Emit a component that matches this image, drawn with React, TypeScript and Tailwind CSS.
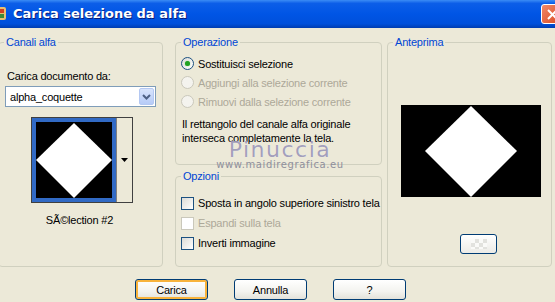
import React from "react";

// Windows XP style dialog: "Carica selezione da alfa"
const ui = "font-['Liberation_Sans',Arial,sans-serif] text-[11px] leading-[14px] tracking-[-0.2px] text-black";

function GroupBox({ title, className, children }: { title: string; className?: string; children?: React.ReactNode }) {
  return (
    <fieldset className={`border border-[#D0D0BF] rounded-[4px] ${className ?? ""}`}>
      <legend className="ml-[5px] px-[2px] text-[#0046D5] leading-[13px]">{title}</legend>
      {children}
    </fieldset>
  );
}

function Radio({ label, checked, disabled }: { label: string; checked?: boolean; disabled?: boolean }) {
  return (
    <div className="flex items-center h-[19px] whitespace-nowrap">
      <span
        className={`w-[13px] h-[13px] rounded-full border flex items-center justify-center ${
          disabled ? "border-[#CAC8BB] bg-[#F4F3EE]" : "border-[#1C5180] bg-[linear-gradient(135deg,#DCDCD7,#FFFFFF)]"
        }`}
      >
        {checked && <span className="w-[5px] h-[5px] rounded-full bg-[#21A121] shadow-[0_0_1px_#5CD05C]" />}
      </span>
      <span className={`ml-[4px] ${disabled ? "text-[#ACA899]" : ""}`}>{label}</span>
    </div>
  );
}

function Check({ label, disabled }: { label: string; disabled?: boolean }) {
  return (
    <div className="flex items-center h-[20px] whitespace-nowrap">
      <span
        className={`w-[13px] h-[13px] shrink-0 border ${
          disabled ? "border-[#CAC8BB] bg-white" : "border-[#1C5180] bg-[linear-gradient(135deg,#DCDCD7,#FFFFFF)]"
        }`}
      />
      <span className={`ml-[4px] ${disabled ? "text-[#ACA899]" : ""}`}>{label}</span>
    </div>
  );
}

function XpButton({ label, focused }: { label: string; focused?: boolean }) {
  return (
    <button
      className={`w-[73px] h-[21px] rounded-[3px] border border-[#003C74] bg-[linear-gradient(to_bottom,#FFFFFF,#F3F3EF_60%,#E3E2DA)] flex items-center justify-center ${
        focused ? "shadow-[inset_0_0_0_2px_#F8B33C]" : ""
      }`}
    >
      {label}
    </button>
  );
}

function Diamond({ w, h, cls }: { w: number; h: number; cls: string }) {
  return (
    <svg width={w} height={h} className={cls}>
      <rect width={w} height={h} fill="#000" />
      <polygon points={`${w / 2},1 ${w / 2 + h / 2},${h / 2} ${w / 2},${h} ${w / 2 - h / 2},${h / 2}`} fill="#fff" />
    </svg>
  );
}

export default function App() {
  return (
    <div className={`w-[555px] h-[302px] overflow-hidden bg-[#ECE9D8] ${ui}`}>
      {/* Title bar */}
      <div className="h-[28px] flex items-center bg-[linear-gradient(to_bottom,#3B8CF5,#0C5EE8_12%,#0055E5_50%,#0050DB_85%,#003DB0)]">
        <svg width="8" height="16">
          <rect x="-4" y="1" width="10" height="13" rx="2" fill="#E8C070" />
          <rect x="-2" y="3" width="6" height="4" fill="#D04020" />
          <rect x="-2" y="8" width="6" height="4" fill="#3A8A3A" />
        </svg>
        <span className="ml-[5px] text-white font-bold text-[13px] tracking-normal font-['DejaVu_Sans',sans-serif] [text-shadow:1px_1px_0_#0A1E7A]">
          Carica selezione da alfa
        </span>
        <div className="ml-auto mr-[-9px] w-[23px] h-[20px] rounded-[3px] border border-white bg-[linear-gradient(135deg,#F0896A,#D9461C)] flex items-center justify-center">
          <svg width="11" height="11">
            <path d="M1 1 L10 10 M10 1 L1 10" stroke="#fff" strokeWidth="2" />
          </svg>
        </div>
      </div>

      {/* Body */}
      <div className="flex pt-[8px] h-[239px]">
        {/* Canali alfa */}
        <GroupBox title="Canali alfa" className="ml-[-2px] w-[165px] h-[231px]">
          <div className="pl-[8px] mt-[20px]">Carica documento da:</div>
          <div className="ml-[6px] mt-[3px] w-[151px] h-[21px] border border-[#7F9DB9] bg-white flex items-center">
            <span className="ml-[4px] flex-1">alpha_coquette</span>
            <span className="w-[15px] h-[17px] mr-[1px] rounded-[2px] bg-[linear-gradient(to_bottom,#D8E4FC,#B6CBF7)] border border-[#B4C8F2] flex items-center justify-center">
              <svg width="9" height="6">
                <path d="M1 1 L4.5 4.5 L8 1" stroke="#4D6185" strokeWidth="2" fill="none" />
              </svg>
            </span>
          </div>
          <div className="ml-[32px] mt-[10px] w-[102px] h-[86px] border border-[#404040] flex bg-[#ECE9D8]">
            <div className="w-[84px] h-[84px] border-[4px] border-[#316AC5]">
              <Diamond w={76} h={76} cls="block" />
            </div>
            <div className="flex-1 border-l border-[#808080] flex items-center justify-center">
              <svg width="7" height="4">
                <path d="M0 0 L7 0 L3.5 4 Z" fill="#000" />
              </svg>
            </div>
          </div>
          <div className="mt-[10px] text-center pr-[2px]">SÃ©lection #2</div>
        </GroupBox>

        {/* Middle column */}
        <div className="ml-[12px] w-[207px] flex flex-col">
          <GroupBox title="Operazione" className="relative h-[129px]">
            <div className="pl-[5px] mt-[5px]">
              <Radio label="Sostituisci selezione" checked />
              <Radio label="Aggiungi alla selezione corrente" disabled />
              <Radio label="Rimuovi dalla selezione corrente" disabled />
              <div className="mt-[6px] pl-[1px]">
                Il rettangolo del canale alfa originale
                <br />
                interseca completamente la tela.
              </div>
            </div>
            <div className="absolute left-[43px] top-[90px] w-[122px] flex flex-col items-center leading-none pointer-events-none">
              <span className="text-[22px] font-['DejaVu_Sans',sans-serif] text-[#9C98B8] opacity-90 [text-shadow:0_0_1px_#fff] tracking-[1.5px]">
                Pinuccia
              </span>
              <span className="mt-[-1px] text-[10px] font-['DejaVu_Sans',sans-serif] text-[#8F8F9C] tracking-[0.6px]">
                www.maidiregrafica.eu
              </span>
            </div>
          </GroupBox>
          <GroupBox title="Opzioni" className="mt-[5px] h-[97px]">
            <div className="pl-[5px] mt-[10px]">
              <Check label="Sposta in angolo superiore sinistro tela" />
              <Check label="Espandi sulla tela" disabled />
              <Check label="Inverti immagine" />
            </div>
          </GroupBox>
        </div>

        {/* Anteprima */}
        <GroupBox title="Anteprima" className="ml-[5px] w-[165px] h-[231px]">
          <Diamond w={140} h={92} cls="block ml-[13px] mt-[56px]" />
          <div className="ml-[72px] mt-[37px] w-[37px] h-[20px] rounded-[3px] border border-[#003C74] bg-[linear-gradient(to_bottom,#FFFFFF,#ECEBE6)] flex items-center justify-center">
            <div className="w-[16px] h-[10px] bg-[repeating-conic-gradient(#E2E2DE_0%_25%,#FAFAF8_0%_50%)] bg-[length:8px_8px]" />
          </div>
        </GroupBox>
      </div>

      {/* Buttons */}
      <div className="flex mt-[12px] pl-[135px] gap-[26px]">
        <XpButton label="Carica" focused />
        <XpButton label="Annulla" />
        <XpButton label="?" />
      </div>
    </div>
  );
}
